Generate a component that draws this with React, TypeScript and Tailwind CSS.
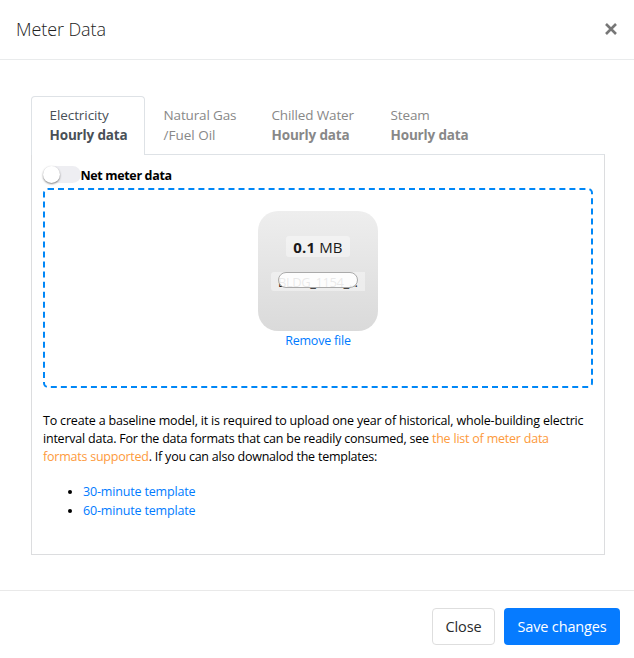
import React from 'react';

type Tab = { top: string; bottom: string; bold: boolean; width: string };

const tabs: Tab[] = [
  { top: 'Natural Gas', bottom: '/Fuel Oil', bold: false, width: 'w-[108px]' },
  { top: 'Chilled Water', bottom: 'Hourly data', bold: true, width: 'w-[119px]' },
  { top: 'Steam', bottom: 'Hourly data', bold: true, width: 'w-[115px]' },
];

function Header() {
  return (
    <header className="flex h-[60px] items-center justify-between border-b border-[#e9ebec] pl-4 pr-[17px]">
      <h1 className="pb-0.5 text-[18px] font-light leading-6 tracking-[-0.1px] text-[#222]">Meter Data</h1>
      <button aria-label="Dismiss" className="mb-px flex size-3 items-center justify-center">
        <svg width="12" height="12" viewBox="0 0 12 12" stroke="#777" strokeWidth="2.6" strokeLinecap="butt">
          <path d="M1 1l10 10M11 1L1 11" />
        </svg>
      </button>
    </header>
  );
}

function TabBar() {
  return (
    <div className="flex h-[58px] text-[13.5px] leading-5 whitespace-nowrap">
      <div className="-mb-px h-[59px] w-[114px] rounded-t-[4px] border border-b-0 border-[#dee2e6] bg-white pl-[17.5px] pt-2 text-[#495057]">
        <div className="tracking-[-0.08px]">Electricity</div>
        <div className="font-bold tracking-[-0.15px]">Hourly data</div>
      </div>
      {tabs.map((t) => (
        <div key={t.top} className={`${t.width} pl-[18.5px] pt-[9px] text-[#888]`}>
          <div className="tracking-[-0.14px]">{t.top}</div>
          <div className={t.bold ? 'font-bold tracking-[-0.15px]' : 'tracking-normal'}>{t.bottom}</div>
        </div>
      ))}
    </div>
  );
}

function FileCard() {
  return (
    <div className="flex h-[120px] w-[120px] flex-col items-center rounded-[20px] bg-linear-to-b from-[#eee] to-[#dadada] pt-[25px]">
      <div className="flex h-[21px] w-16 items-center justify-center rounded-[3px] bg-white/40 text-[15px] leading-5 tracking-[0.15px] whitespace-nowrap text-[#1a1a1a]">
        <span>
          <strong>0.1</strong> MB
        </span>
      </div>
      <div className="relative mt-[15px] h-[19px] w-[94px] rounded-l-[3px] bg-white/40 pl-[7px] text-[13px] leading-[20px] tracking-[-0.45px] whitespace-nowrap text-[#222]">
        BLDG_1154_...
        <div className="absolute left-[7px] top-0 h-4 w-20 rounded-full border border-[#aaa] bg-white/90" />
      </div>
    </div>
  );
}

export default function App() {
  return (
    <div className="flex h-[658px] w-[634px] flex-col overflow-hidden bg-white font-['Open_Sans','Noto_Sans',sans-serif] text-black">
      <Header />
      <main className="h-[530px] pl-[31px] pt-9 pr-[29px]">
        <TabBar />
        <div className="flex h-[401px] flex-col border border-[#dcdddf] border-t-[#dee2e6] px-[11px] pt-[11px]">
          <div className="flex h-[22px] items-start">
            <div className="h-[17px] w-[37.5px] rounded-full bg-[#eeeef2]">
              <div className="size-[17px] rounded-full bg-white shadow-[0_1px_2px_rgba(0,0,0,0.5)]" />
            </div>
            <span className="pt-px text-[12.5px] font-bold leading-[18px] tracking-[-0.35px] whitespace-nowrap">Net meter data</span>
          </div>
          <div className="flex h-[200px] shrink-0 flex-col items-center rounded-[5px] border-2 border-dashed border-[#0087f7] pt-[21px]">
            <FileCard />
            <a className="pt-px text-[12.5px] leading-[18px] tracking-[-0.2px] text-[#007bff]">Remove file</a>
          </div>
          <div className="mt-6 text-[12.5px] leading-[18px] whitespace-nowrap">
            <div><span className="tracking-[-0.18px]">To create a baseline model, it is required to upload one year of historical, whole-building electric</span></div>
            <div><span className="tracking-[-0.22px]">interval data. For the data formats that can be readily consumed, see <a className="text-[#fd9a3c]">the list of meter data</a></span></div>
            <div><span className="tracking-[-0.23px]"><a className="text-[#fd9a3c]">formats supported</a>. If you can also downalod the templates:</span></div>
          </div>
          <ul className="mt-4 list-disc pl-10 text-[12.5px] leading-[19px]">
            <li><a className="tracking-[-0.17px] text-[#007bff]">30-minute template</a></li>
            <li><a className="tracking-[-0.17px] text-[#007bff]">60-minute template</a></li>
          </ul>
        </div>
      </main>
      <footer className="flex h-[68px] justify-end gap-[9px] border-t border-[#e9e9e9] pr-[14px] pt-[17px] text-[14.5px] whitespace-nowrap">
        <button className="h-[37px] w-[63px] rounded-[4px] border border-[#dedede] tracking-[-0.08px] text-[#292b2c]">Close</button>
        <button className="h-[37px] w-[116px] rounded-[4px] bg-[#067bff] tracking-[-0.15px] text-white">Save changes</button>
      </footer>
    </div>
  );
}
